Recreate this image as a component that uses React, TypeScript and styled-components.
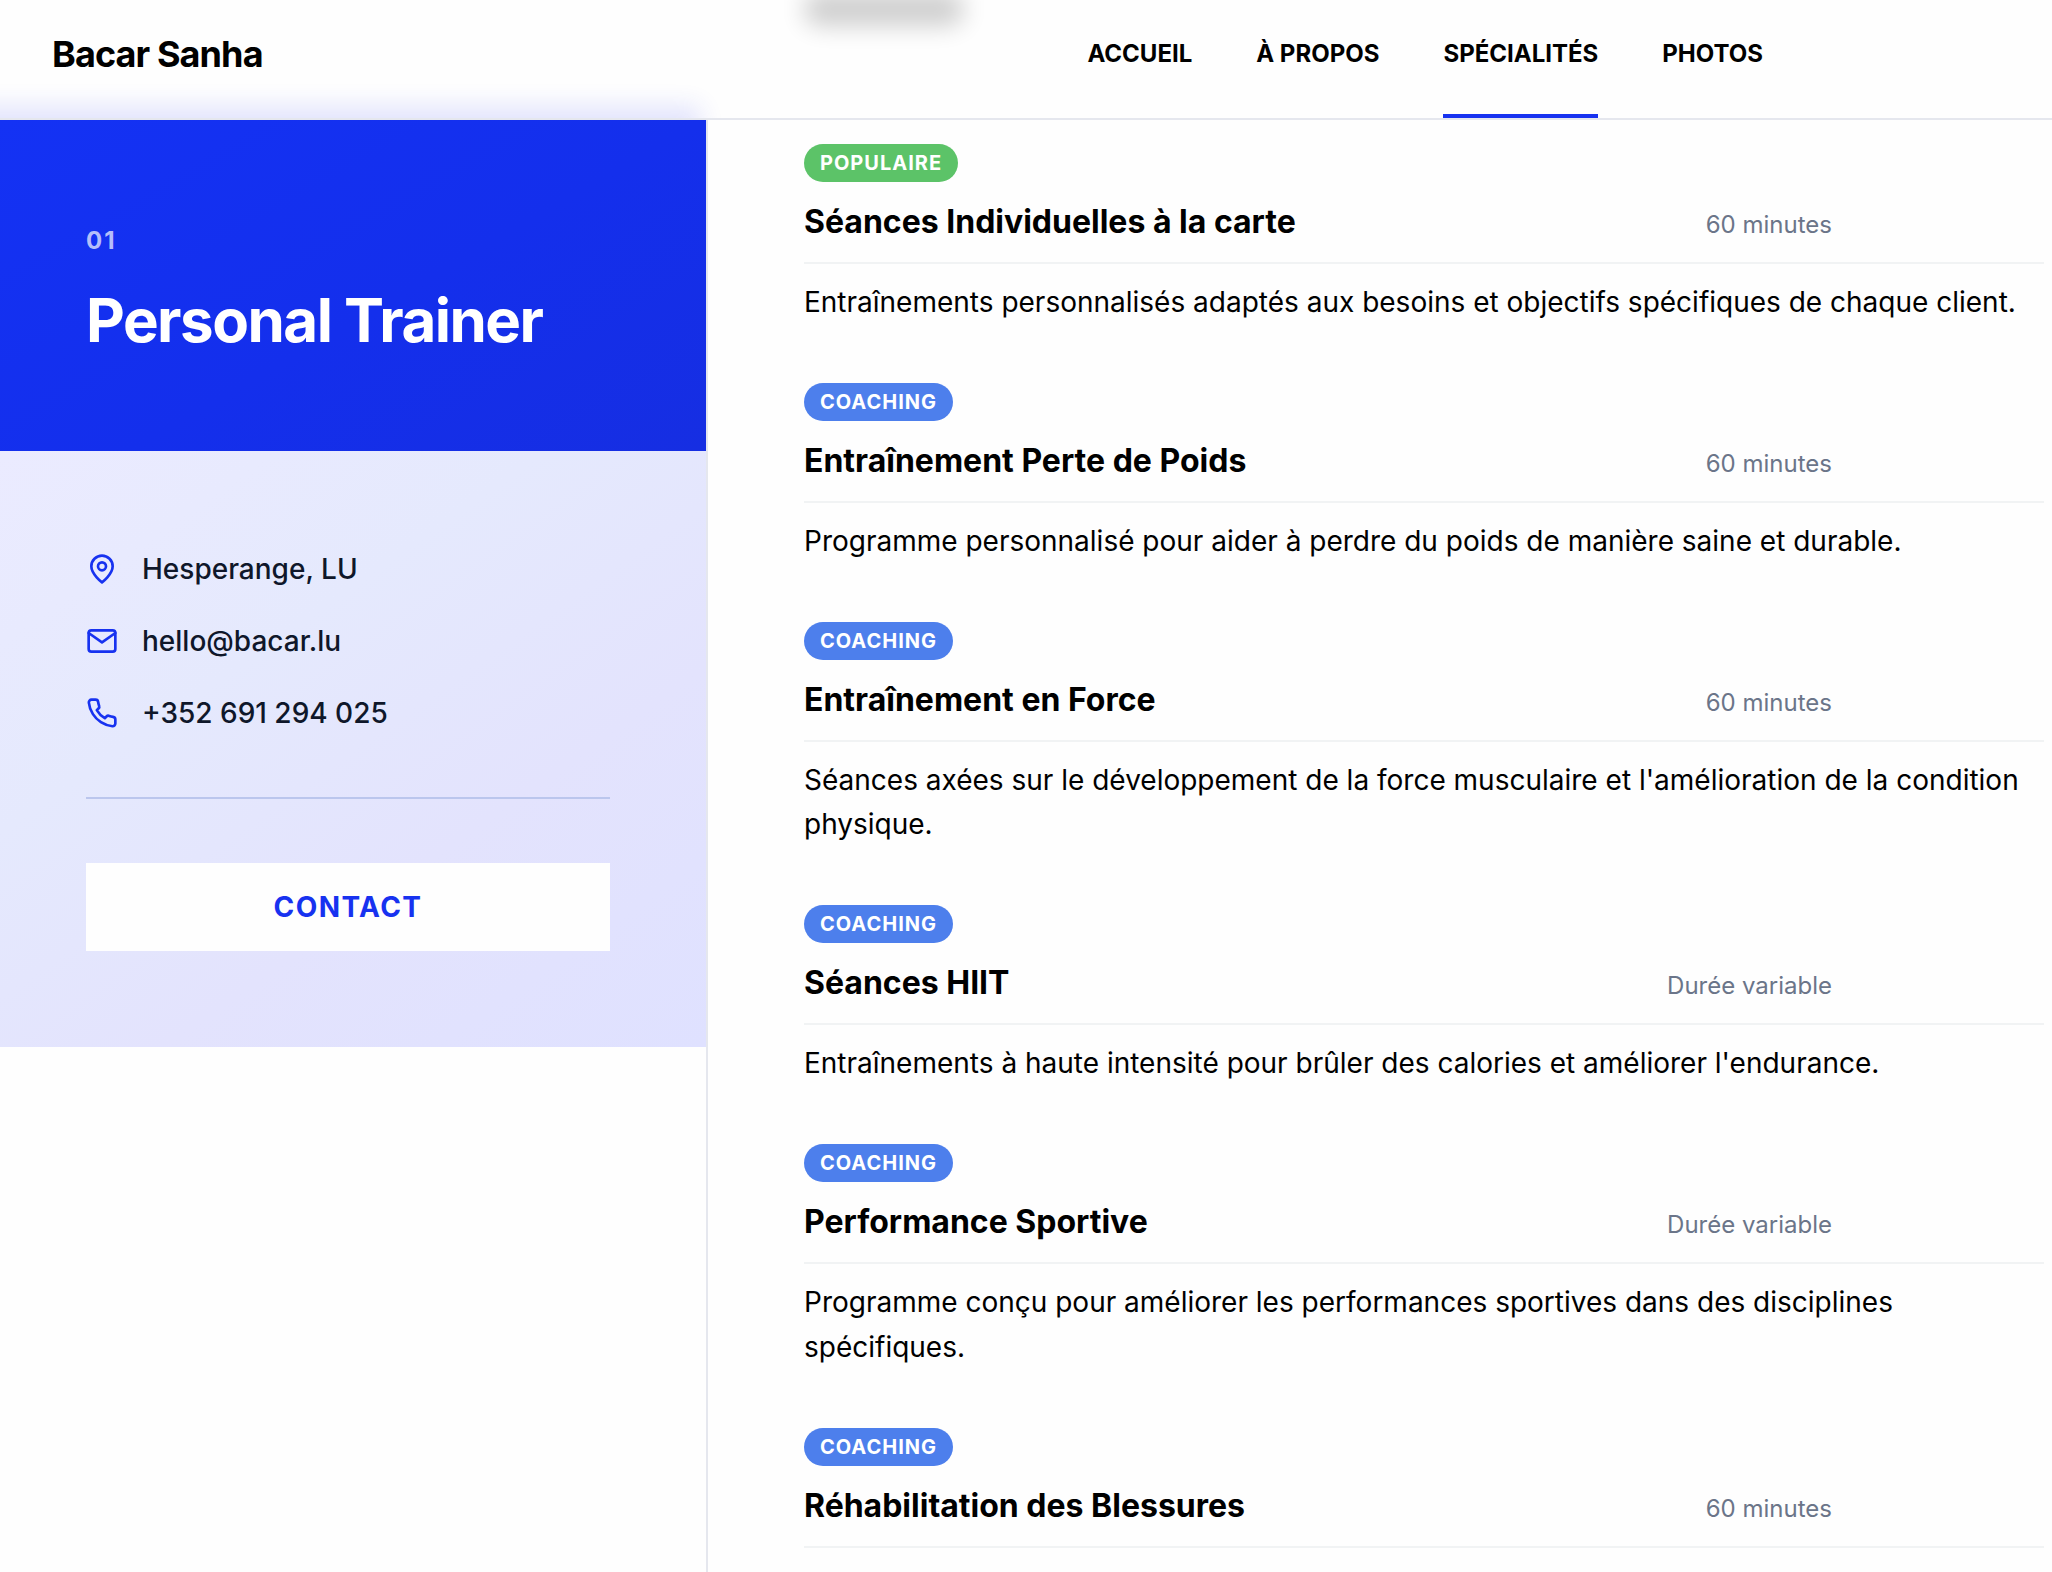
import React from "react";
import styled, { createGlobalStyle } from "styled-components";

const GlobalStyle = createGlobalStyle`
  *, *::before, *::after { box-sizing: border-box; }
  body {
    margin: 0;
    background: #fefefe;
    color: #000;
    font-family: Inter, "Liberation Sans", sans-serif;
  }
`;

const Page = styled.div`
  min-height: 100vh;
  display: flex;
  flex-direction: column;
`;

const Header = styled.header`
  position: relative;
  display: flex;
  align-items: stretch;
  justify-content: space-between;
  height: 120px;
  padding: 0 289px 0 52px;
  border-bottom: 2px solid #e5e7ee;
  overflow: hidden;
`;

/* Blue card showing softly through the frosted header */
const CardGlow = styled.div`
  position: absolute;
  left: -40px;
  bottom: -32px;
  width: 740px;
  height: 44px;
  background: #2a36f0;
  opacity: 0.13;
  filter: blur(12px);
`;

/* Section heading scrolled under the frosted header */
const HeadingGlow = styled.div`
  position: absolute;
  left: 804px;
  top: -8px;
  width: 160px;
  height: 34px;
  border-radius: 16px;
  background: #000;
  opacity: 0.19;
  filter: blur(12px);
`;

const Brand = styled.a`
  position: relative;
  align-self: center;
  margin-top: -10px;
  font-size: 36px;
  line-height: 44px;
  font-weight: 700;
  letter-spacing: -0.025em;
  color: #000;
  text-decoration: none;
`;

const Nav = styled.nav`
  position: relative;
  display: flex;
  gap: 64px;
`;

const NavLink = styled.a<{ $active?: boolean }>`
  display: flex;
  align-items: center;
  padding-bottom: 6px;
  border-bottom: 4px solid ${(p) => (p.$active ? "#1732f0" : "transparent")};
  font-size: 24px;
  line-height: 32px;
  font-weight: 700;
  color: #000;
  text-decoration: none;
`;

const Body = styled.div`
  flex: 1;
  display: flex;
`;

const Sidebar = styled.aside`
  flex: none;
  width: 708px;
  border-right: 2px solid #e5e7ee;
`;

const Hero = styled.section`
  display: flex;
  flex-direction: column;
  gap: 20px;
  padding: 96px 86px;
  color: #fff;
  background: linear-gradient(150deg, #1432f4 0%, #142fec 55%, #162ee2 100%);
`;

const Index = styled.span`
  font-size: 24px;
  line-height: 50px;
  font-weight: 700;
  letter-spacing: 2px;
  color: rgba(255, 255, 255, 0.7);
`;

const HeroTitle = styled.h1`
  margin: 0;
  font-size: 60px;
  line-height: 69px;
  font-weight: 700;
  letter-spacing: -0.025em;
`;

const ContactPanel = styled.section`
  padding: 96px 96px 96px 86px;
  background: linear-gradient(145deg, #ebebff 0%, #e5e9fd 35%, #e3e3fd 65%, #dfe1ff 100%);
`;

const ContactList = styled.ul`
  display: flex;
  flex-direction: column;
  gap: 28px;
  margin: 0;
  padding: 0 0 62px;
  list-style: none;
  border-bottom: 2px solid #bbc6ed;
`;

const ContactRow = styled.li`
  display: flex;
  align-items: center;
  gap: 24px;
  font-size: 28px;
  line-height: 44px;
  font-weight: 500;
  color: #0f172a;
`;

const Icon = styled.svg`
  flex: none;
  width: 32px;
  height: 32px;
  fill: none;
  stroke: #1732f0;
  stroke-width: 2;
  stroke-linecap: round;
  stroke-linejoin: round;
`;

const ContactButton = styled.button`
  display: block;
  width: 100%;
  height: 88px;
  margin-top: 64px;
  border: 0;
  background: #fefefe;
  color: #1732f0;
  font-family: inherit;
  font-size: 28px;
  font-weight: 700;
  letter-spacing: 0.05em;
`;

const Services = styled.main`
  flex: 1;
  min-width: 0;
  display: flex;
  flex-direction: column;
  gap: 58px;
  padding: 24px 8px 0 96px;
`;

const Service = styled.article``;

const Tag = styled.span<{ $popular?: boolean }>`
  display: block;
  width: fit-content;
  padding: 0 16px;
  border-radius: 19px;
  background: ${(p) => (p.$popular ? "#5cc368" : "#4d7fec")};
  color: #fff;
  font-size: 20px;
  line-height: 38px;
  font-weight: 700;
  letter-spacing: 0.05em;
`;

const ServiceHead = styled.div`
  display: flex;
  align-items: baseline;
  justify-content: space-between;
  margin-top: 16px;
  padding: 0 212px 16px 0;
  border-bottom: 2px solid #f1f3f4;
`;

const ServiceTitle = styled.h2`
  margin: 0;
  font-size: 32px;
  line-height: 48px;
  font-weight: 700;
`;

const Duration = styled.span`
  font-size: 24px;
  line-height: 32px;
  color: #6b7589;
`;

const Description = styled.p`
  margin: 16px 0 0;
  font-size: 28px;
  line-height: 1.6;
`;

const services = [
  { tag: "POPULAIRE", popular: true, title: "Séances Individuelles à la carte", duration: "60 minutes", text: "Entraînements personnalisés adaptés aux besoins et objectifs spécifiques de chaque client." },
  { tag: "COACHING", title: "Entraînement Perte de Poids", duration: "60 minutes", text: "Programme personnalisé pour aider à perdre du poids de manière saine et durable." },
  { tag: "COACHING", title: "Entraînement en Force", duration: "60 minutes", text: "Séances axées sur le développement de la force musculaire et l'amélioration de la condition physique." },
  { tag: "COACHING", title: "Séances HIIT", duration: "Durée variable", text: "Entraînements à haute intensité pour brûler des calories et améliorer l'endurance." },
  { tag: "COACHING", title: "Performance Sportive", duration: "Durée variable", text: "Programme conçu pour améliorer les performances sportives dans des disciplines spécifiques." },
  { tag: "COACHING", title: "Réhabilitation des Blessures", duration: "60 minutes", text: "" },
];

export default function App() {
  return (
    <Page>
      <GlobalStyle />
      <Header>
        <CardGlow />
        <HeadingGlow />
        <Brand href="#">Bacar Sanha</Brand>
        <Nav>
          <NavLink href="#accueil">ACCUEIL</NavLink>
          <NavLink href="#a-propos">À PROPOS</NavLink>
          <NavLink href="#specialites" $active>SPÉCIALITÉS</NavLink>
          <NavLink href="#photos">PHOTOS</NavLink>
        </Nav>
      </Header>
      <Body>
        <Sidebar>
          <Hero>
            <Index>01</Index>
            <HeroTitle>Personal Trainer</HeroTitle>
          </Hero>
          <ContactPanel>
            <ContactList>
              <ContactRow>
                <Icon viewBox="0 0 24 24" aria-hidden="true">
                  <path d="M20 10c0 6-8 12-8 12s-8-6-8-12a8 8 0 0 1 16 0Z" />
                  <circle cx="12" cy="10" r="3" />
                </Icon>
                Hesperange, LU
              </ContactRow>
              <ContactRow>
                <Icon viewBox="0 0 24 24" aria-hidden="true">
                  <rect width="20" height="16" x="2" y="4" rx="2" />
                  <path d="M22 6l-10 7L2 6" />
                </Icon>
                hello@bacar.lu
              </ContactRow>
              <ContactRow>
                <Icon viewBox="0 0 24 24" aria-hidden="true">
                  <path d="M22 16.92v3a2 2 0 0 1-2.18 2 19.79 19.79 0 0 1-8.63-3.07 19.5 19.5 0 0 1-6-6 19.79 19.79 0 0 1-3.07-8.67A2 2 0 0 1 4.11 2h3a2 2 0 0 1 2 1.72 12.84 12.84 0 0 0 .7 2.81 2 2 0 0 1-.45 2.11L8.09 9.91a16 16 0 0 0 6 6l1.27-1.27a2 2 0 0 1 2.11-.45 12.84 12.84 0 0 0 2.81.7A2 2 0 0 1 22 16.92z" />
                </Icon>
                +352 691 294 025
              </ContactRow>
            </ContactList>
            <ContactButton type="button">CONTACT</ContactButton>
          </ContactPanel>
        </Sidebar>
        <Services>
          {services.map((s) => (
            <Service key={s.title}>
              <Tag $popular={s.popular}>{s.tag}</Tag>
              <ServiceHead>
                <ServiceTitle>{s.title}</ServiceTitle>
                <Duration>{s.duration}</Duration>
              </ServiceHead>
              {s.text && <Description>{s.text}</Description>}
            </Service>
          ))}
        </Services>
      </Body>
    </Page>
  );
}
